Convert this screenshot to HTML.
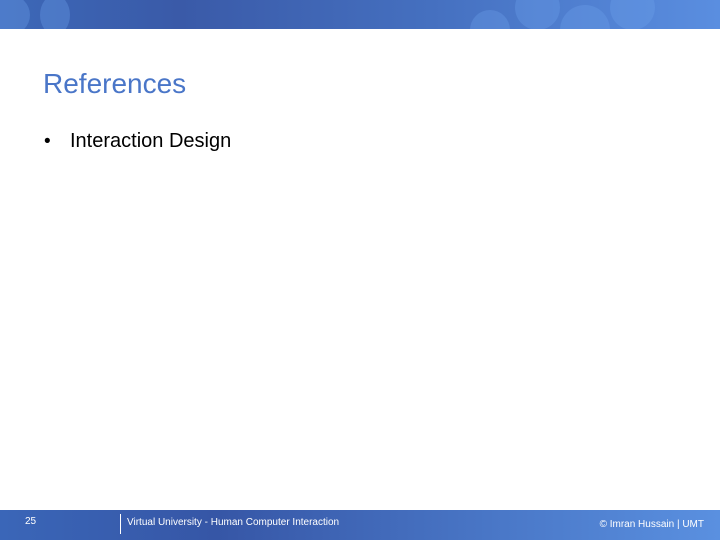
<!DOCTYPE html>
<html><head><style>
body{margin:0;width:720px;height:540px;position:relative;background:#fff;font-family:"Liberation Sans",sans-serif;overflow:hidden}
.top{position:absolute;left:0;top:0;width:720px;height:29px;background:linear-gradient(90deg,#3c68b8 0%,#3a5aa8 25%,#4570c0 60%,#5a8ee0 100%);overflow:hidden}
.bot{position:absolute;left:0;top:510px;width:720px;height:30px;background:linear-gradient(90deg,#3a66b8 0%,#3656a6 30%,#4a78c8 70%,#5a90e0 100%);color:#fff;font-size:10px}
.c{position:absolute;border-radius:50%;background:rgba(110,160,235,.35)}
</style></head><body>
<div class="top">
<div class="c" style="left:-10px;top:-5px;width:40px;height:40px"></div>
<div class="c" style="left:40px;top:-5px;width:30px;height:40px"></div>
<div class="c" style="left:470px;top:10px;width:40px;height:40px"></div>
<div class="c" style="left:515px;top:-15px;width:45px;height:45px"></div>
<div class="c" style="left:560px;top:5px;width:50px;height:50px"></div>
<div class="c" style="left:610px;top:-15px;width:45px;height:45px"></div>
</div>
<div style="position:absolute;left:43px;top:68px;font-size:28px;color:#4a76c8">References</div>
<div style="position:absolute;left:44px;top:131px;font-size:19px;color:#000">•</div>
<div style="position:absolute;left:70px;top:130px;font-size:20px;color:#000">Interaction Design</div>
<div class="bot">
<span style="position:absolute;left:25px;top:6px">25</span>
<div style="position:absolute;left:120px;top:4px;width:1px;height:20px;background:#fff"></div>
<span style="position:absolute;left:127px;top:7px">Virtual University - Human Computer Interaction</span>
<span style="position:absolute;right:16px;top:9px">© Imran Hussain | UMT</span>
</div>
</body></html>
